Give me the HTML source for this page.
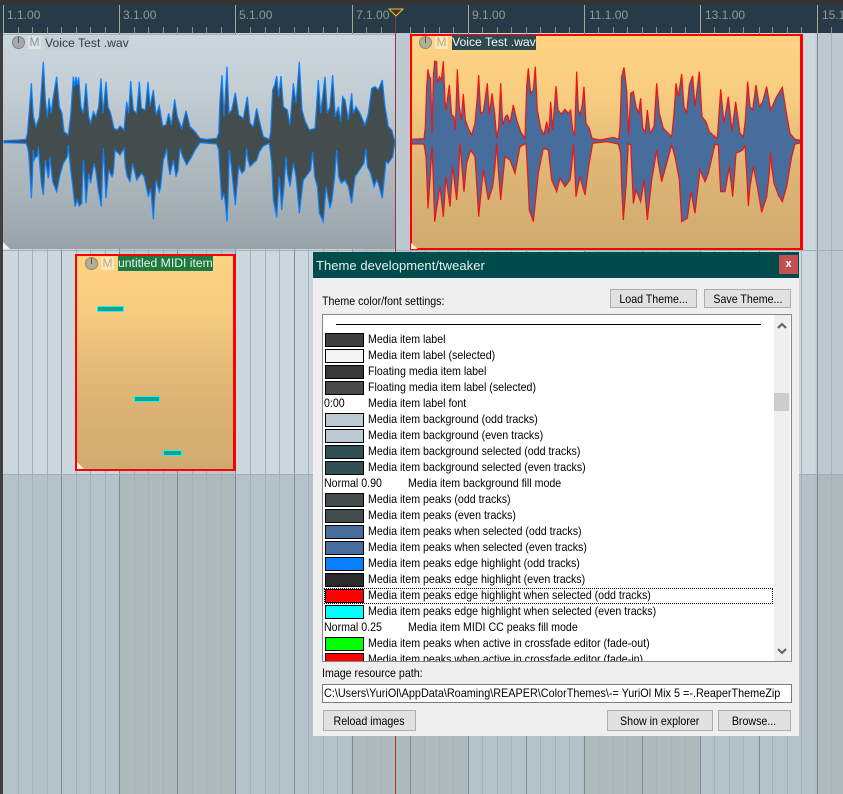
<!DOCTYPE html>
<html><head><meta charset="utf-8">
<style>
html,body{margin:0;padding:0;width:843px;height:794px;overflow:hidden;background:#cdd7de;font-family:"Liberation Sans",sans-serif;}
.a{position:absolute}
#top{left:0;top:0;width:843px;height:5px;background:#333}
#ruler{left:0;top:5px;width:843px;height:28px;background:#263a48}
.rl{position:absolute;top:3px;font-size:12px;line-height:14px;color:#8f9a94;white-space:nowrap}
#t1{left:3px;top:33px;width:840px;height:441px;background:repeating-linear-gradient(90deg,#cdd7de 0,#cdd7de 116.1px,#bdc8d0 116.1px,#bdc8d0 232.2px)}
#t3{left:3px;top:474px;width:840px;height:320px;background:repeating-linear-gradient(90deg,#b5c2c9 0,#b5c2c9 116.1px,#adb9bb 116.1px,#adb9bb 232.2px)}
#left{left:0;top:33px;width:3px;height:761px;background:#3d3f40}
.item{position:absolute;box-sizing:border-box;overflow:hidden}
.knob{position:absolute;width:11px;height:11px;border-radius:50%;background:#a5abab;border:1px solid #7c8484}
.knob:after{content:"";position:absolute;left:5px;top:0;width:1px;height:6px;background:#555}
.mb{position:absolute;width:13px;height:13px;font-size:12px;line-height:13px;text-align:center}
.lab{position:absolute;font-size:12.2px;line-height:14px;white-space:nowrap;padding:0}
.note{position:absolute;box-sizing:border-box;border:1px solid #0ff;background:#2a9a86;height:6px}
#dlg{left:313px;top:252px;width:486px;height:484px;background:#efefef}
#title{left:0;top:0;width:486px;height:26px;background:#004c4c;color:#e8f2f2;font-size:13px;line-height:27px;padding-left:3px;box-sizing:border-box;letter-spacing:.05px}
#close{left:466px;top:3px;width:19px;height:19px;background:#c25050;color:#fff;font-size:11px;font-weight:bold;text-align:center;line-height:18px}
.t{position:absolute;font-size:12px;line-height:14px;color:#000;white-space:nowrap;transform:scaleX(.887);transform-origin:0 0}
#list .t{margin-top:-1px}
.btn{position:absolute;box-sizing:border-box;background:#e1e1e1;border:1px solid #adadad;text-align:center;color:#000;height:19px;line-height:17px}
.btn span{display:inline-block;font-size:12px;transform:scaleX(.887);white-space:nowrap}
#list{left:9px;top:62px;width:470px;height:348px;background:#fff;border:1px solid #82878c;box-sizing:border-box;overflow:hidden}
.sw{position:absolute;left:2px;width:39px;height:14px;box-sizing:border-box;border:1px solid #000}
#sb{position:absolute;left:451px;top:0;width:16px;height:346px;background:#efefef}
#thumb{position:absolute;left:0;top:78px;width:15px;height:18px;background:#cdcdcd}
#path{left:9px;top:432px;width:470px;height:19px;background:#fff;border:1px solid #7a7a7a;box-sizing:border-box;overflow:hidden}
#path span{position:absolute;left:1px;top:1px;font-size:12px;line-height:15px;white-space:nowrap;transform:scaleX(.903);transform-origin:0 0}
</style></head><body>
<div class="a" id="top"></div>
<div class="a" id="t1"></div>
<div class="a" id="t3"></div>
<div class="a" id="left"></div>

<svg class="a" style="left:0;top:0" width="843" height="794" shape-rendering="crispEdges">
<g transform="translate(.5,0)">
<path d="M18 33V794M32 33V794M47 33V794M76 33V794M90 33V794M105 33V794M134 33V794M148 33V794M163 33V794M192 33V794M206 33V794M221 33V794M250 33V794M265 33V794M279 33V794M308 33V794M323 33V794M337 33V794M366 33V794M381 33V794M424 33V794M439 33V794M453 33V794M482 33V794M497 33V794M511 33V794M540 33V794M555 33V794M569 33V794M598 33V794M613 33V794M627 33V794M656 33V794M671 33V794M685 33V794M714 33V794M729 33V794M743 33V794M772 33V794M787 33V794M801 33V794M831 33V794" stroke="#a2b2b8" fill="none"/>
<path d="M61 33V794M119 33V794M177 33V794M235 33V794M294 33V794M352 33V794M410 33V794M468 33V794M526 33V794M584 33V794M642 33V794M700 33V794M759 33V794M817 33V794" stroke="#768d96" fill="none"/>
</g>
<rect x="3" y="250" width="840" height="1" fill="#9fb0b5"/>
<rect x="3" y="474" width="840" height="1" fill="#9fb0b5"/>
</svg>

<div class="a" id="ruler">
<span class="rl" style="left:7px">1.1.00</span>
<span class="rl" style="left:123px">3.1.00</span>
<span class="rl" style="left:239px">5.1.00</span>
<span class="rl" style="left:356px">7.1.00</span>
<span class="rl" style="left:472px">9.1.00</span>
<span class="rl" style="left:589px">11.1.00</span>
<span class="rl" style="left:705px">13.1.00</span>
<span class="rl" style="left:822px">15.1</span>
<svg class="a" style="left:0;top:0" width="843" height="28" shape-rendering="crispEdges">
<g transform="translate(.5,0)">
<path d="M18 22V28M32 22V28M47 22V28M61 22V28M76 22V28M90 22V28M105 22V28M134 22V28M148 22V28M163 22V28M177 22V28M192 22V28M206 22V28M221 22V28M250 22V28M265 22V28M279 22V28M294 22V28M308 22V28M323 22V28M337 22V28M366 22V28M381 22V28M410 22V28M424 22V28M439 22V28M453 22V28M482 22V28M497 22V28M511 22V28M526 22V28M540 22V28M555 22V28M569 22V28M598 22V28M613 22V28M627 22V28M642 22V28M656 22V28M671 22V28M685 22V28M714 22V28M729 22V28M743 22V28M759 22V28M772 22V28M787 22V28M801 22V28M831 22V28" stroke="#8f917f" fill="none"/>
<path d="M3 0V28M119 0V28M235 0V28M352 0V28M468 0V28M584 0V28M700 0V28M817 0V28" stroke="#a9a88f" fill="none"/>
</g>
</svg>
</div>

<!-- item 1 -->
<div class="item" style="left:3px;top:34px;width:392px;height:215px;background:linear-gradient(#cbd6dd 0,#c3ced5 25%,#b4bfc6 50%,#a8b3b9 75%,#98a3a9 100%);border-top:1px solid #a6b0b5"></div>
<!-- item 2 -->
<div class="item" style="left:410px;top:34px;width:393px;height:216px;background:linear-gradient(#ffd484 0,#f7cc80 30%,#dfb776 60%,#cfaa6f 100%)"></div>
<!-- MIDI item -->
<div class="item" style="left:75px;top:254px;width:161px;height:217px;background:linear-gradient(#ffd484 0,#f7cc80 25%,#dfb776 60%,#cfaa6f 100%)"></div>

<svg class="a" style="left:0;top:0" width="843" height="794" viewBox="0 0 2529 2382">
<g fill="#434d4d" stroke="#0a80ff" stroke-width="3.6" stroke-linejoin="miter">
<polygon points="12,422 55,420 78,418 82,400 88,330 94,250 100,350 108,380 118,350 122,300 130,185 136,300 142,350 147,295 153,340 160,290 170,230 178,320 186,340 192,395 205,405 212,345 220,230 224,260 228,230 232,255 236,232 243,320 250,340 258,250 266,350 272,370 280,335 288,350 296,320 303,235 309,340 318,245 324,320 332,340 342,385 352,390 360,378 372,390 380,305 386,340 392,243 400,330 410,340 418,245 424,325 436,330 444,245 450,320 460,270 468,345 478,318 488,378 498,375 506,340 514,375 524,298 532,350 545,385 558,332 570,380 585,395 600,415 620,418 650,415 656,400 660,300 666,225 672,350 681,200 687,340 695,330 706,278 716,345 730,355 742,290 750,370 760,380 770,325 780,370 790,410 808,418 812,395 818,270 824,255 830,228 836,290 843,228 850,320 862,330 870,375 880,250 888,310 898,185 906,330 916,365 928,390 945,385 955,240 962,340 975,230 982,340 990,320 998,225 1006,350 1015,320 1022,365 1028,290 1035,300 1045,360 1055,280 1060,340 1068,320 1080,340 1095,375 1105,340 1115,265 1125,260 1135,270 1147,240 1155,320 1165,380 1175,390 1184,422 1184,430 1178,470 1165,490 1158,485 1147,595 1135,550 1130,540 1122,560 1112,520 1102,500 1098,445 1092,490 1085,500 1072,520 1065,530 1055,610 1045,560 1035,540 1024,550 1016,530 1010,450 1004,530 996,600 990,625 978,560 970,665 958,640 952,560 944,530 938,455 932,510 925,520 910,540 898,640 888,530 880,490 870,560 862,520 858,470 852,560 845,630 838,530 830,652 824,620 820,600 815,490 808,430 790,438 778,455 770,480 760,490 750,500 744,480 740,445 734,510 726,520 716,500 706,615 698,540 694,500 688,450 684,600 681,665 676,610 672,580 665,600 660,520 656,450 650,432 600,428 585,450 575,470 560,495 548,470 540,445 534,510 528,530 520,480 510,525 504,490 500,445 494,470 490,480 482,560 478,575 468,540 460,658 452,565 445,590 432,530 425,520 410,540 398,490 390,545 382,530 376,500 372,445 360,465 345,450 340,520 336,530 326,510 318,595 313,500 310,445 307,520 304,620 295,570 287,510 282,490 272,550 266,520 258,610 252,500 250,480 247,560 245,610 238,618 232,600 225,620 216,540 212,510 207,460 205,435 202,470 190,490 180,525 170,575 158,545 153,500 150,470 147,520 145,535 136,480 130,585 124,550 118,480 115,440 112,470 108,470 102,480 100,450 97,540 94,595 90,520 86,460 82,440 78,430 12,428"/>
</g>
<g transform="translate(1200,0)" fill="#466d9b" stroke="#f31212" stroke-width="3.6" stroke-linejoin="miter">
<polygon points="32,418 72,416 76,380 80,260 84,208 88,230 92,235 96,400 100,230 104,184 110,185 112,250 118,230 124,240 130,184 135,300 138,330 148,255 155,345 162,350 166,390 172,208 178,320 184,360 190,282 196,360 205,385 215,405 225,370 232,290 236,225 242,340 250,335 262,250 268,345 276,280 284,340 290,415 296,380 302,250 308,375 316,350 322,345 330,370 340,315 350,360 362,395 375,415 380,260 385,205 392,280 400,270 406,200 412,330 422,385 432,405 440,365 447,400 452,305 458,390 468,258 474,330 484,342 495,328 505,340 512,330 518,390 524,405 530,215 535,330 540,345 546,320 552,260 558,370 568,385 576,415 600,420 640,412 656,418 660,380 665,230 672,202 680,270 686,405 692,280 700,275 708,320 716,340 722,295 728,385 736,395 742,330 750,400 762,380 770,250 778,340 790,385 800,395 815,410 822,340 828,250 835,290 845,222 852,320 860,340 868,255 878,228 885,320 898,215 906,350 918,365 928,395 945,410 952,415 962,268 972,370 985,290 996,395 1007,305 1020,400 1030,410 1036,360 1043,245 1050,320 1058,330 1068,255 1078,320 1088,305 1100,260 1112,330 1130,290 1147,262 1160,345 1170,400 1185,418 1206,422 1206,428 1185,432 1175,470 1160,560 1147,605 1135,585 1122,550 1115,500 1112,455 1108,520 1100,590 1085,637 1072,560 1060,500 1050,560 1045,618 1040,520 1035,435 1028,450 1008,460 1003,530 998,590 988,500 975,575 962,575 958,500 955,435 945,432 925,520 915,545 900,510 885,640 873,575 862,655 845,665 838,540 825,470 815,435 800,490 785,545 775,490 770,450 762,500 755,540 742,660 732,540 722,605 708,570 700,610 696,520 692,435 685,430 678,560 670,660 665,560 662,460 655,432 620,425 578,430 566,500 555,585 540,530 528,590 524,500 520,432 515,500 510,540 495,560 480,535 470,575 455,540 445,450 430,445 415,520 400,665 388,630 383,520 378,430 360,440 345,520 330,480 315,470 302,600 295,510 290,430 285,500 278,560 265,600 250,510 236,650 230,550 225,470 212,450 200,490 192,575 184,480 180,430 176,520 170,600 158,500 150,620 138,530 130,650 120,560 104,665 100,540 96,440 90,540 84,625 78,470 72,432 32,432"/>
</g>
</svg>

<!-- item borders -->
<div class="a" style="left:410px;top:34px;width:393px;height:216px;box-sizing:border-box;border:solid #f00;border-width:2px 3px 2px 2px"></div>
<div class="a" style="left:75px;top:254px;width:161px;height:217px;box-sizing:border-box;border:solid #f00;border-width:2px 3px 2px 2px"></div>

<!-- corner triangles and cursor -->
<svg class="a" style="left:0;top:0" width="843" height="794">
<polygon points="3,242 10,249 3,249" fill="#f1f3f4"/>
<polygon points="411,243 418,249 411,249" fill="#fff3d8"/>
<polygon points="77,462 84,469 77,469" fill="#fff3d8"/>
<polygon points="389,9 403,9 396,16" fill="#5c2a2a" stroke="#e4c72c" stroke-width="1"/>
<rect x="395" y="16" width="1" height="234" fill="#8c3a3a"/>
<rect x="395" y="250" width="1" height="544" fill="#b03030"/>
</svg>

<!-- item headers -->
<div class="knob" style="left:12px;top:36px"></div>
<div class="mb" style="left:28px;top:36px;background:#dde3e7;color:#8a9499">M</div>
<div class="lab" style="left:45px;top:36px;width:84px;background:#c4d0d8;color:#333a40;height:14px">Voice Test .wav</div>

<div class="knob" style="left:419px;top:36px;background:#b3ad91;border-color:#8c8a78"></div>
<div class="mb" style="left:435px;top:36px;background:#ffe6b8;color:#b9ab8a">M</div>
<div class="lab" style="left:452px;top:35px;width:84px;height:15px;background:#2e4a50;color:#f2f4f4">Voice Test .wav</div>

<div class="knob" style="left:85px;top:257px;background:#b3ad91;border-color:#8c8a78"></div>
<div class="mb" style="left:101px;top:257px;background:#ffe6b8;color:#b9ab8a">M</div>
<div class="lab" style="left:118px;top:256px;width:95px;height:15px;background:#1f7a42;color:#e8f2e8">untitled MIDI item</div>

<div class="note" style="left:97px;top:306px;width:27px"></div>
<div class="note" style="left:134px;top:396px;width:26px"></div>
<div class="note" style="left:163px;top:450px;width:19px"></div>

<!-- dialog -->
<div class="a" id="dlg">
<div class="a" id="title">Theme development/tweaker</div>
<div class="a" id="close">x</div>
<div class="t" style="left:9px;top:42px">Theme color/font settings:</div>
<div class="btn" style="left:297px;top:37px;width:87px"><span>Load Theme...</span></div>
<div class="btn" style="left:391px;top:37px;width:87px"><span>Save Theme...</span></div>
<div class="a" id="list">
<div class="a" style="left:13px;top:9px;width:425px;height:1px;background:#000"></div>
<div class="sw" style="top:18px;background:#404040"></div><div class="t" style="left:45px;top:18px">Media item label</div>
<div class="sw" style="top:34px;background:#f4f4f4"></div><div class="t" style="left:45px;top:34px">Media item label (selected)</div>
<div class="sw" style="top:50px;background:#383838"></div><div class="t" style="left:45px;top:50px">Floating media item label</div>
<div class="sw" style="top:66px;background:#4a4a4a"></div><div class="t" style="left:45px;top:66px">Floating media item label (selected)</div>
<div class="t" style="left:1px;top:82px">0:00</div><div class="t" style="left:45px;top:82px">Media item label font</div>
<div class="sw" style="top:98px;background:#bccbd3"></div><div class="t" style="left:45px;top:98px">Media item background (odd tracks)</div>
<div class="sw" style="top:114px;background:#bccbd3"></div><div class="t" style="left:45px;top:114px">Media item background (even tracks)</div>
<div class="sw" style="top:130px;background:#2f4f52"></div><div class="t" style="left:45px;top:130px">Media item background selected (odd tracks)</div>
<div class="sw" style="top:146px;background:#2f4f52"></div><div class="t" style="left:45px;top:146px">Media item background selected (even tracks)</div>
<div class="t" style="left:1px;top:162px">Normal 0.90</div><div class="t" style="left:85px;top:162px">Media item background fill mode</div>
<div class="sw" style="top:178px;background:#434d4d"></div><div class="t" style="left:45px;top:178px">Media item peaks (odd tracks)</div>
<div class="sw" style="top:194px;background:#434d4d"></div><div class="t" style="left:45px;top:194px">Media item peaks (even tracks)</div>
<div class="sw" style="top:210px;background:#466d9b"></div><div class="t" style="left:45px;top:210px">Media item peaks when selected (odd tracks)</div>
<div class="sw" style="top:226px;background:#466d9b"></div><div class="t" style="left:45px;top:226px">Media item peaks when selected (even tracks)</div>
<div class="sw" style="top:242px;background:#0a80ff"></div><div class="t" style="left:45px;top:242px">Media item peaks edge highlight (odd tracks)</div>
<div class="sw" style="top:258px;background:#2a2a2a"></div><div class="t" style="left:45px;top:258px">Media item peaks edge highlight (even tracks)</div>
<div class="a" style="left:1px;top:273px;width:449px;height:16px;box-sizing:border-box;border:1px dotted #000"></div>
<div class="sw" style="top:274px;background:#f00"></div><div class="t" style="left:45px;top:274px">Media item peaks edge highlight when selected (odd tracks)</div>
<div class="sw" style="top:290px;background:#0ff"></div><div class="t" style="left:45px;top:290px">Media item peaks edge highlight when selected (even tracks)</div>
<div class="t" style="left:1px;top:306px">Normal 0.25</div><div class="t" style="left:85px;top:306px">Media item MIDI CC peaks fill mode</div>
<div class="sw" style="top:322px;background:#0f0"></div><div class="t" style="left:45px;top:322px">Media item peaks when active in crossfade editor (fade-out)</div>
<div class="sw" style="top:338px;background:#f00"></div><div class="t" style="left:45px;top:338px">Media item peaks when active in crossfade editor (fade-in)</div>
<div id="sb"><div id="thumb"></div>
<svg class="a" style="left:3px;top:7px" width="10" height="7"><path d="M1 6 L5 2 L9 6" fill="none" stroke="#606060" stroke-width="2"/></svg>
<svg class="a" style="left:3px;top:333px" width="10" height="7"><path d="M1 1 L5 5 L9 1" fill="none" stroke="#606060" stroke-width="2"/></svg>
</div>
</div>
<div class="t" style="left:9px;top:414px">Image resource path:</div>
<div class="a" id="path"><span>C:\Users\YuriOl\AppData\Roaming\REAPER\ColorThemes\-= YuriOl Mix 5 =-.ReaperThemeZip</span></div>
<div class="btn" style="left:10px;top:458px;width:93px;height:21px;line-height:19px"><span>Reload images</span></div>
<div class="btn" style="left:294px;top:458px;width:106px;height:21px;line-height:19px"><span>Show in explorer</span></div>
<div class="btn" style="left:405px;top:458px;width:73px;height:21px;line-height:19px"><span>Browse...</span></div>
</div>
</body></html>
